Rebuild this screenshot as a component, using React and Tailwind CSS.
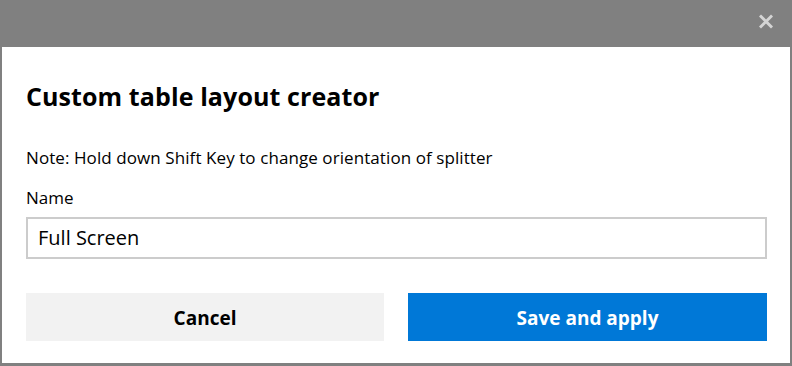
export default function App() {
  return (
    <div className="w-[792px] h-[366px] bg-[#808080] flex flex-col font-['Open_Sans',sans-serif] text-black overflow-hidden">
      <div className="h-[47px] flex justify-end items-start pr-[19px] pt-[14px] shrink-0">
        <svg width="14" height="15" viewBox="0 0 14 15" aria-hidden="true">
          <path d="M2 2.5 L12 12.5 M12 2.5 L2 12.5" stroke="#d4d4d4" strokeWidth="3" strokeLinecap="square" />
        </svg>
      </div>
      <div className="mx-[2px] h-[316px] bg-white pl-6 pr-[23px] pt-[33px] flex flex-col shrink-0">
        <h1 className="text-[25px] leading-[32px] font-bold tracking-[0.1px]">Custom table layout creator</h1>
        <p className="mt-[34px] text-[17px] leading-[24px] tracking-[0.08px]">Note: Hold down Shift Key to change orientation of splitter</p>
        <label className="mt-4 text-[17px] leading-[24px]">Name</label>
        <div className="mt-[7px] h-[42px] border-2 border-[#cccccc] flex items-center px-[10px] text-[20px]">Full Screen</div>
        <div className="mt-[34px] flex gap-6">
          <button className="w-[358px] h-12 bg-[#f2f2f2] text-[19px] font-bold flex items-center justify-center pt-[2px]">Cancel</button>
          <button className="w-[359px] h-12 bg-[#0078d7] text-white text-[19px] font-bold flex items-center justify-center pt-[2px]">Save and apply</button>
        </div>
      </div>
    </div>
  );
}
